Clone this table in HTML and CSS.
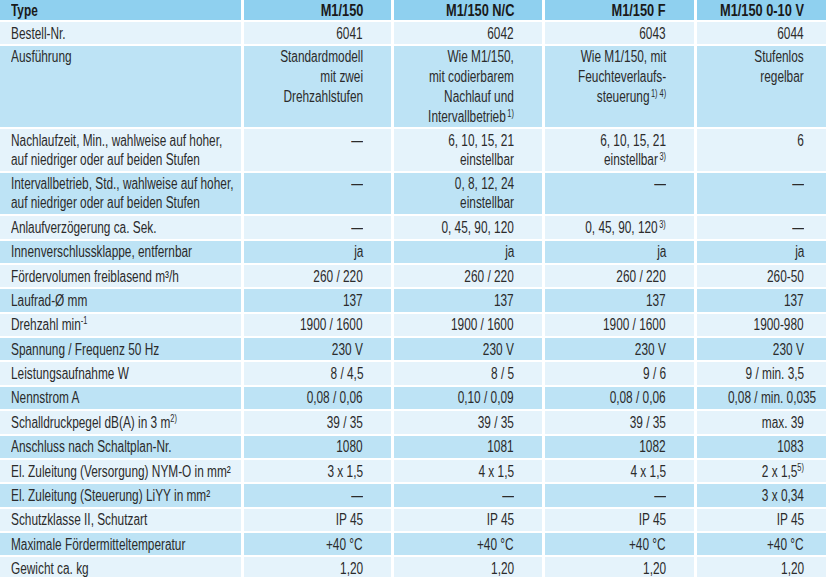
FILE: index.html
```html
<!DOCTYPE html>
<html lang="de">
<head>
<meta charset="utf-8">
<title>Technische Daten M1/150</title>
<link rel="stylesheet" href="styles.css">
</head>
<body>
<div class="spec">
  <div class="row head">
    <div class="c lab"><span class="t">Type</span></div>
    <div class="c"><span class="t">M1/150</span></div>
    <div class="c"><span class="t">M1/150 N/C</span></div>
    <div class="c"><span class="t">M1/150 F</span></div>
    <div class="c last"><span class="t">M1/150 0-10 V</span></div>
  </div>
  <div class="row light">
    <div class="c lab"><span class="t">Bestell-Nr.</span></div>
    <div class="c"><span class="t">6041</span></div>
    <div class="c"><span class="t">6042</span></div>
    <div class="c"><span class="t">6043</span></div>
    <div class="c last"><span class="t">6044</span></div>
  </div>
  <div class="row dark tall">
    <div class="c lab"><span class="t">Ausführung</span></div>
    <div class="c"><span class="t">Standardmodell<br>mit zwei<br>Drehzahlstufen</span></div>
    <div class="c"><span class="t">Wie M1/150,<br>mit codierbarem<br>Nachlauf und<br>Intervallbetrieb<sup>1)</sup></span></div>
    <div class="c"><span class="t">Wie M1/150, mit<br>Feuchteverlaufs-<br>steuerung<sup>1) 4)</sup></span></div>
    <div class="c last"><span class="t">Stufenlos<br>regelbar</span></div>
  </div>
  <div class="row light">
    <div class="c lab"><span class="t">Nachlaufzeit, Min., wahlweise auf hoher,<br>auf niedriger oder auf beiden Stufen</span></div>
    <div class="c"><span class="t">—</span></div>
    <div class="c"><span class="t">6, 10, 15, 21<br>einstellbar</span></div>
    <div class="c"><span class="t">6, 10, 15, 21<br>einstellbar<sup>3)</sup></span></div>
    <div class="c last"><span class="t">6</span></div>
  </div>
  <div class="row dark">
    <div class="c lab"><span class="t">Intervallbetrieb, Std., wahlweise auf hoher,<br>auf niedriger oder auf beiden Stufen</span></div>
    <div class="c"><span class="t">—</span></div>
    <div class="c"><span class="t">0, 8, 12, 24<br>einstellbar</span></div>
    <div class="c"><span class="t">—</span></div>
    <div class="c last"><span class="t">—</span></div>
  </div>
  <div class="row light">
    <div class="c lab"><span class="t">Anlaufverzögerung ca. Sek.</span></div>
    <div class="c"><span class="t">—</span></div>
    <div class="c"><span class="t">0, 45, 90, 120</span></div>
    <div class="c"><span class="t">0, 45, 90, 120<sup>3)</sup></span></div>
    <div class="c last"><span class="t">—</span></div>
  </div>
  <div class="row dark">
    <div class="c lab"><span class="t">Innenverschlussklappe, entfernbar</span></div>
    <div class="c"><span class="t">ja</span></div>
    <div class="c"><span class="t">ja</span></div>
    <div class="c"><span class="t">ja</span></div>
    <div class="c last"><span class="t">ja</span></div>
  </div>
  <div class="row light">
    <div class="c lab"><span class="t">Fördervolumen freiblasend m³/h</span></div>
    <div class="c"><span class="t">260 / 220</span></div>
    <div class="c"><span class="t">260 / 220</span></div>
    <div class="c"><span class="t">260 / 220</span></div>
    <div class="c last"><span class="t">260-50</span></div>
  </div>
  <div class="row dark">
    <div class="c lab"><span class="t">Laufrad-Ø mm</span></div>
    <div class="c"><span class="t">137</span></div>
    <div class="c"><span class="t">137</span></div>
    <div class="c"><span class="t">137</span></div>
    <div class="c last"><span class="t">137</span></div>
  </div>
  <div class="row light">
    <div class="c lab"><span class="t">Drehzahl min<sup class="hi">-1</sup></span></div>
    <div class="c"><span class="t">1900 / 1600</span></div>
    <div class="c"><span class="t">1900 / 1600</span></div>
    <div class="c"><span class="t">1900 / 1600</span></div>
    <div class="c last"><span class="t">1900-980</span></div>
  </div>
  <div class="row dark">
    <div class="c lab"><span class="t">Spannung / Frequenz 50 Hz</span></div>
    <div class="c"><span class="t">230 V</span></div>
    <div class="c"><span class="t">230 V</span></div>
    <div class="c"><span class="t">230 V</span></div>
    <div class="c last"><span class="t">230 V</span></div>
  </div>
  <div class="row light">
    <div class="c lab"><span class="t">Leistungsaufnahme W</span></div>
    <div class="c"><span class="t">8 / 4,5</span></div>
    <div class="c"><span class="t">8 / 5</span></div>
    <div class="c"><span class="t">9 / 6</span></div>
    <div class="c last"><span class="t">9 / min. 3,5</span></div>
  </div>
  <div class="row dark">
    <div class="c lab"><span class="t">Nennstrom A</span></div>
    <div class="c"><span class="t">0,08 / 0,06</span></div>
    <div class="c"><span class="t">0,10 / 0,09</span></div>
    <div class="c"><span class="t">0,08 / 0,06</span></div>
    <div class="c last"><span class="t">0,08 / min. 0,035</span></div>
  </div>
  <div class="row light">
    <div class="c lab"><span class="t">Schalldruckpegel dB(A) in 3 m<sup class="hi">2)</sup></span></div>
    <div class="c"><span class="t">39 / 35</span></div>
    <div class="c"><span class="t">39 / 35</span></div>
    <div class="c"><span class="t">39 / 35</span></div>
    <div class="c last"><span class="t">max. 39</span></div>
  </div>
  <div class="row dark">
    <div class="c lab"><span class="t">Anschluss nach Schaltplan-Nr.</span></div>
    <div class="c"><span class="t">1080</span></div>
    <div class="c"><span class="t">1081</span></div>
    <div class="c"><span class="t">1082</span></div>
    <div class="c last"><span class="t">1083</span></div>
  </div>
  <div class="row light">
    <div class="c lab"><span class="t">El. Zuleitung (Versorgung) NYM-O in mm²</span></div>
    <div class="c"><span class="t">3 x 1,5</span></div>
    <div class="c"><span class="t">4 x 1,5</span></div>
    <div class="c"><span class="t">4 x 1,5</span></div>
    <div class="c last"><span class="t">2 x 1,5<sup class="hi">5)</sup></span></div>
  </div>
  <div class="row dark">
    <div class="c lab"><span class="t">El. Zuleitung (Steuerung) LiYY in mm²</span></div>
    <div class="c"><span class="t">—</span></div>
    <div class="c"><span class="t">—</span></div>
    <div class="c"><span class="t">—</span></div>
    <div class="c last"><span class="t">3 x 0,34</span></div>
  </div>
  <div class="row light">
    <div class="c lab"><span class="t">Schutzklasse II, Schutzart</span></div>
    <div class="c"><span class="t">IP 45</span></div>
    <div class="c"><span class="t">IP 45</span></div>
    <div class="c"><span class="t">IP 45</span></div>
    <div class="c last"><span class="t">IP 45</span></div>
  </div>
  <div class="row dark">
    <div class="c lab"><span class="t">Maximale Fördermitteltemperatur</span></div>
    <div class="c"><span class="t">+40 °C</span></div>
    <div class="c"><span class="t">+40 °C</span></div>
    <div class="c"><span class="t">+40 °C</span></div>
    <div class="c last"><span class="t">+40 °C</span></div>
  </div>
  <div class="row light">
    <div class="c lab"><span class="t">Gewicht ca. kg</span></div>
    <div class="c"><span class="t">1,20</span></div>
    <div class="c"><span class="t">1,20</span></div>
    <div class="c"><span class="t">1,20</span></div>
    <div class="c last"><span class="t">1,20</span></div>
  </div>
</div>
</body>
</html>
```
FILE: styles.css
```css
html, body {
  margin: 0;
  padding: 0;
  background: #ffffff;
}

.spec {
  display: flex;
  flex-direction: column;
  gap: 2px;
  width: 826px;
  overflow: hidden;
  font-family: "Liberation Sans", Arial, sans-serif;
  font-size: 16px;
  color: #2b2b2b;
}

.row {
  display: grid;
  grid-template-columns: 241px 147px 148px 149px 129px;
  column-gap: 3px;
}

.c {
  text-align: right;
  padding: 1.7px 28px 1.7px 0;
  line-height: 19px;
  white-space: nowrap;
}

.c.lab {
  text-align: left;
  padding-left: 11px;
  padding-right: 0;
}

.c.last {
  padding-right: 22px;
}

.t {
  display: inline-block;
  transform: scaleX(0.74);
  transform-origin: right center;
}

.lab .t {
  transform-origin: left center;
}

.head .c {
  background: #8fd0ef;
  font-weight: bold;
  color: #1a1a1a;
  padding-top: 0.5px;
  padding-bottom: 0.5px;
}

.head .t {
  transform: scaleX(0.8);
}

.head .lab .t {
  transform: scaleX(0.74);
}

.light .c {
  background: #e5f3fb;
}

.dark .c {
  background: #bde3f5;
}

.tall .c {
  line-height: 20px;
  padding-top: 1px;
  padding-bottom: 0;
}

sup {
  font-size: 10px;
  line-height: 0;
  vertical-align: 5px;
  margin-left: 2px;
}

sup.hi {
  margin-left: 0;
  vertical-align: 6px;
}
```
